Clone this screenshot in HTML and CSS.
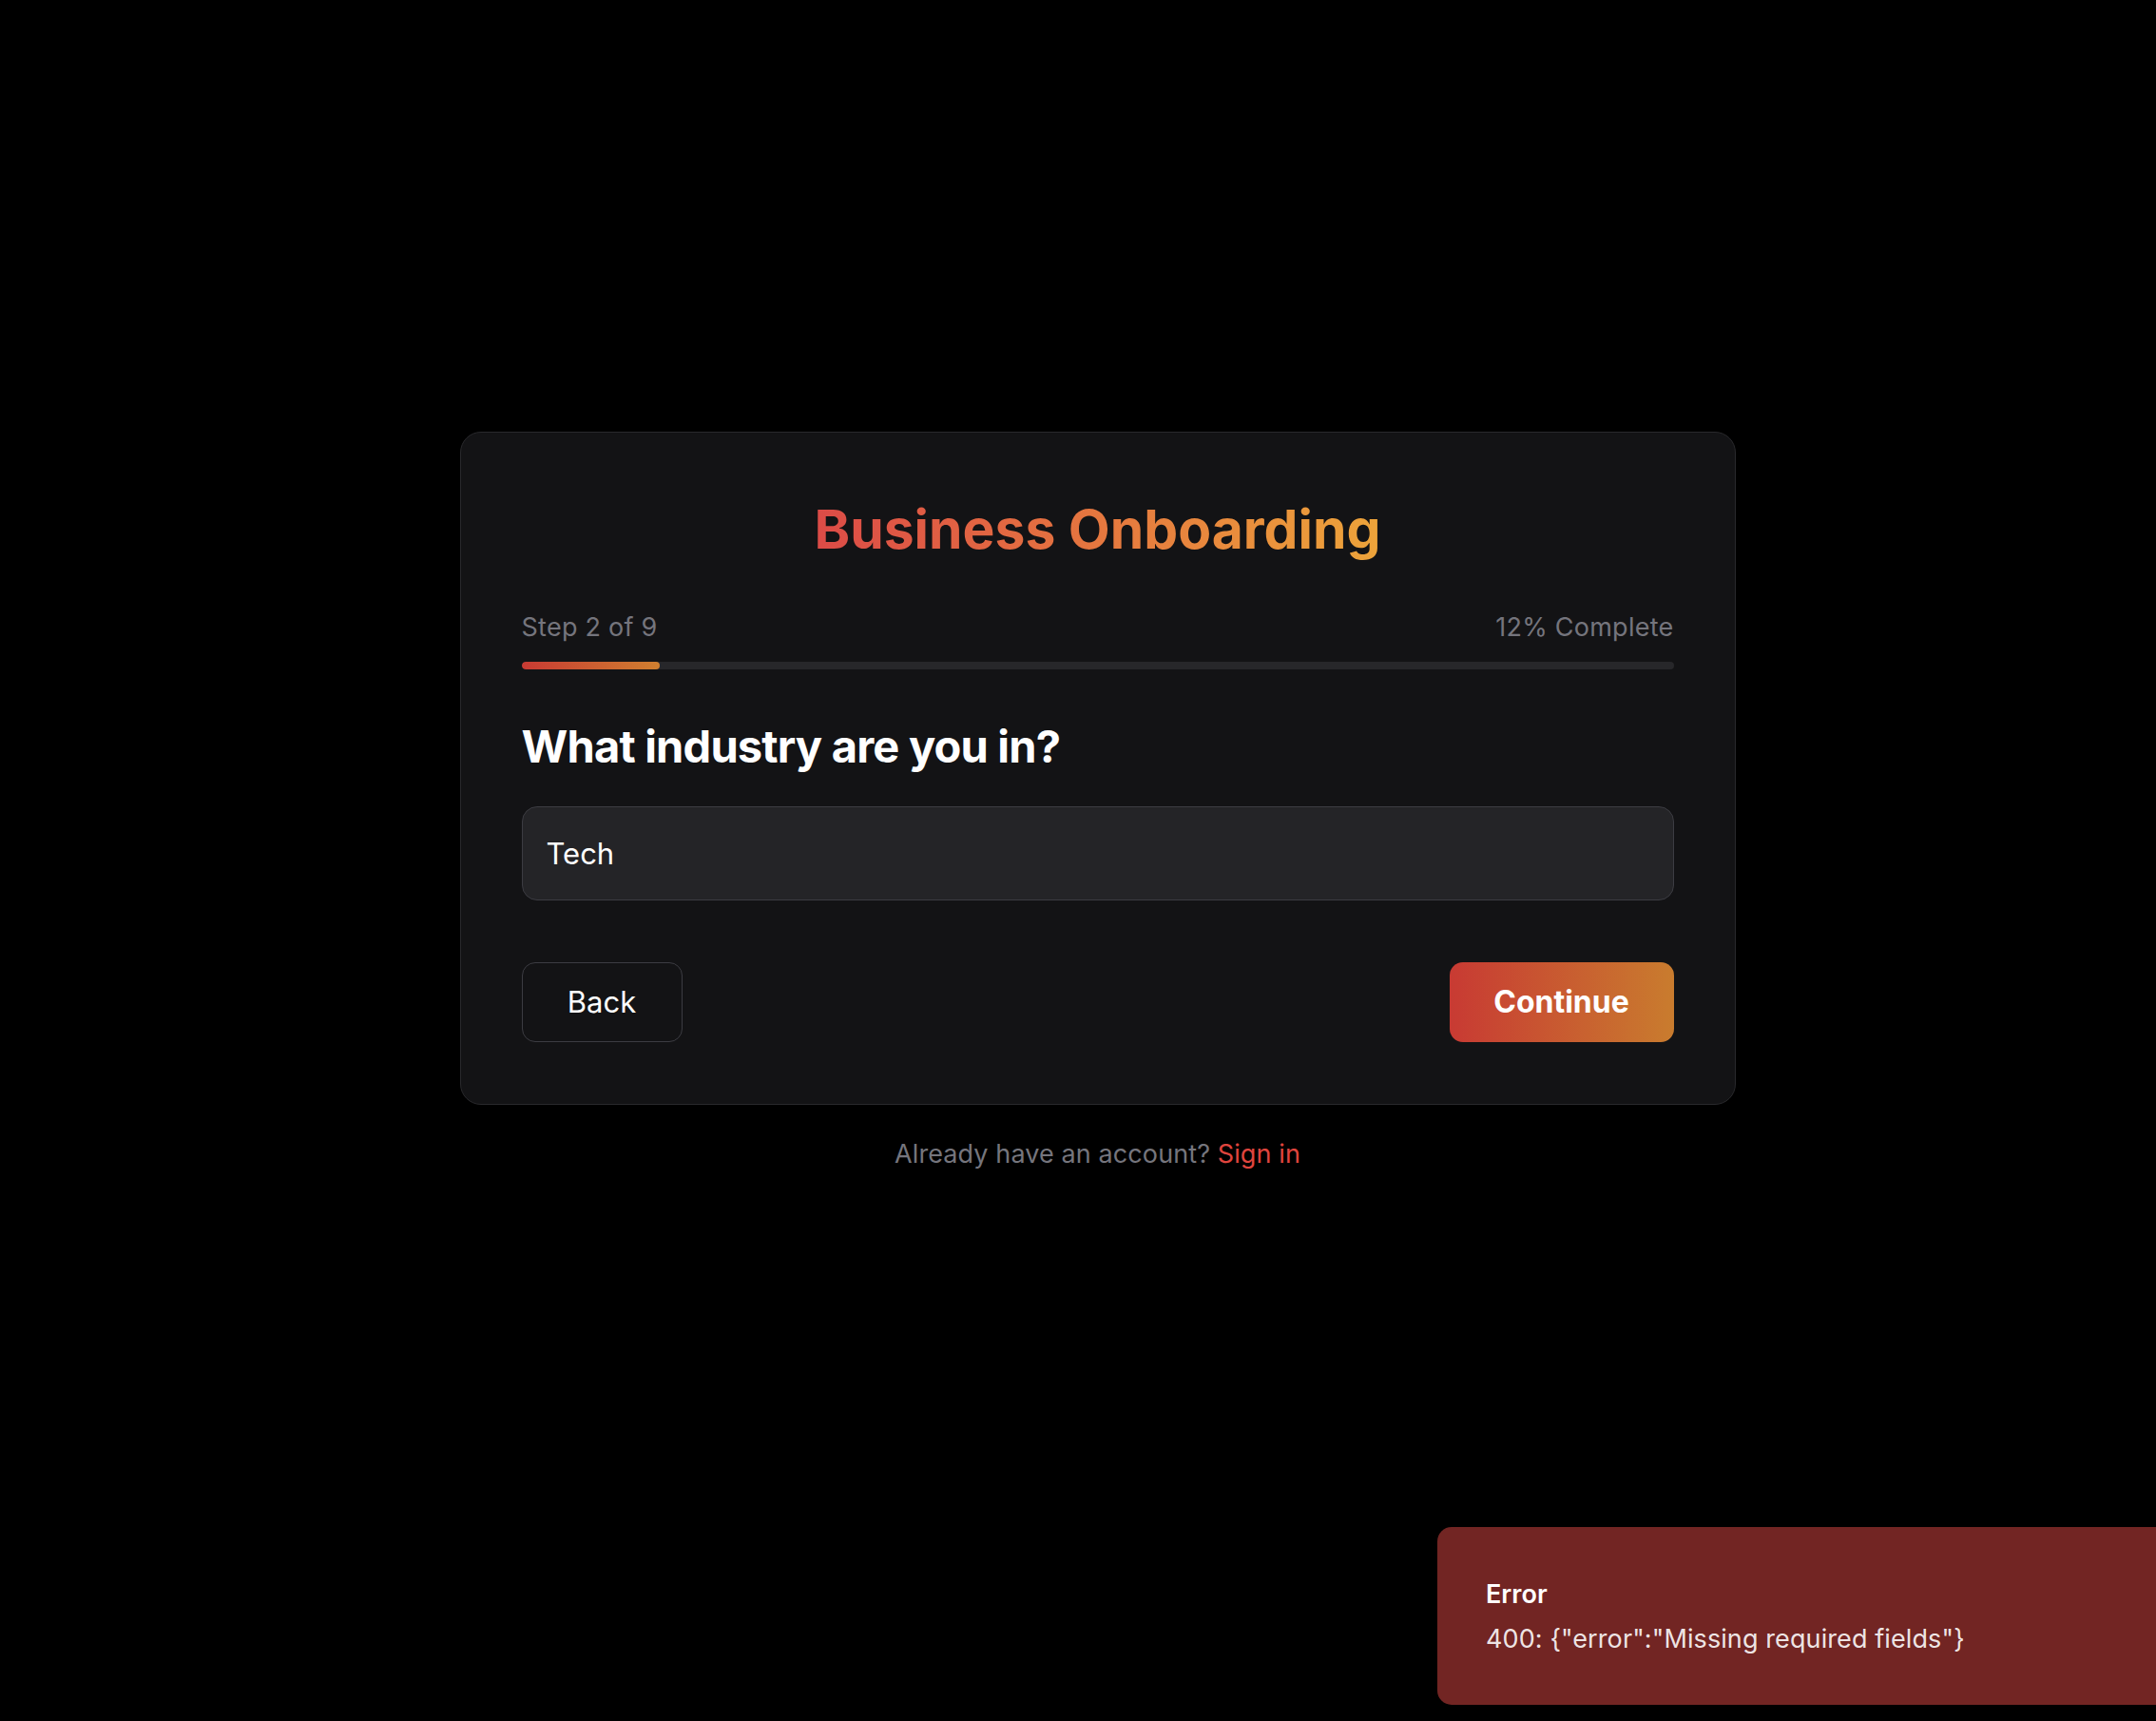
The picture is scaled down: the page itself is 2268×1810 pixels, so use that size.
FILE: index.html
```html
<!DOCTYPE html>
<html lang="en">
<head>
<meta charset="utf-8">
<title>Business Onboarding</title>
<link rel="stylesheet" href="styles.css">
</head>
<body>
<main class="page">
  <section class="card">
    <h1 class="title">Business Onboarding</h1>
    <div class="progress-meta">
      <span>Step 2 of 9</span>
      <span>12% Complete</span>
    </div>
    <div class="track"><div class="fill" style="width:12%"></div></div>
    <h2 class="question">What industry are you in?</h2>
    <input class="field" type="text" value="Tech">
    <div class="actions">
      <button class="btn-back" type="button">Back</button>
      <button class="btn-continue" type="button">Continue</button>
    </div>
  </section>
  <p class="footer">Already have an account? <a class="signin" href="#">Sign in</a></p>
</main>
<div class="toast">
  <div class="toast-title">Error</div>
  <div class="toast-msg">400: {"error":"Missing required fields"}</div>
</div>
</body>
</html>
```
FILE: styles.css
```css
* { box-sizing: border-box; }
html, body {
  margin: 0;
  background: #000;
  font-family: Inter, "Noto Sans", "Liberation Sans", sans-serif;
  color: #fff;
}
body { overflow: hidden; height: 1810px; }
.page {
  display: flex;
  flex-direction: column;
  align-items: center;
  padding-top: 454px;
  padding-left: 41px;
}
.card {
  width: 1342px;
  background: #131315;
  border: 1.5px solid #29292c;
  border-radius: 22px;
  padding: 68px 64px 65px;
  display: flex;
  flex-direction: column;
}
.title {
  margin: 0;
  font-size: 57px;
  line-height: 68px;
  font-weight: 700;
  text-align: center;
  letter-spacing: 0;
  background: linear-gradient(90deg, #dc4b47 0%, #e5773f 50%, #eda43a 100%);
  -webkit-background-clip: text;
  background-clip: text;
  color: transparent;
  align-self: center;
}
.progress-meta {
  margin-top: 51px;
  display: flex;
  justify-content: space-between;
  font-size: 27px;
  line-height: 36px;
  letter-spacing: 0.25px;
  color: #75757d;
}
.track {
  margin-top: 17.5px;
  height: 8px;
  border-radius: 4px;
  background: #27272a;
  overflow: hidden;
}
.fill {
  height: 100%;
  border-radius: 4px;
  background: linear-gradient(90deg, #c83a33, #d0802f);
}
.question {
  margin: 53px 0 0;
  font-size: 47px;
  line-height: 56px;
  font-weight: 700;
  letter-spacing: -0.8px;
}
.field {
  margin-top: 35px;
  height: 99px;
  width: 100%;
  background: #242427;
  border: 1.5px solid #3c3c42;
  border-radius: 16px;
  padding: 0 25px;
  font-family: inherit;
  font-size: 31px;
  color: #fff;
  outline: none;
}
.actions {
  margin-top: 65px;
  display: flex;
  justify-content: space-between;
}
.btn-back {
  width: 169px;
  height: 84px;
  background: transparent;
  border: 1.5px solid #3c3c42;
  border-radius: 14px;
  color: #fff;
  font-family: inherit;
  font-size: 31px;
}
.btn-continue {
  width: 236px;
  height: 84px;
  border: 0;
  border-radius: 14px;
  background: linear-gradient(90deg, #c83a33, #c97c2e);
  color: #fff;
  font-family: inherit;
  font-size: 32px;
  font-weight: 700;
}
.footer {
  margin: 34.5px 0 0;
  font-size: 27px;
  line-height: 36px;
  letter-spacing: 0.1px;
  color: #75757d;
}
.signin {
  color: #e0453e;
  text-decoration: none;
}
.toast {
  position: fixed;
  left: 1512px;
  top: 1606px;
  width: 820px;
  height: 187px;
  background: #722523;
  border-radius: 15px;
  padding: 54px 51px 0;
}
.toast-title {
  font-size: 27px;
  line-height: 33px;
  font-weight: 600;
  color: #fff;
}
.toast-msg {
  margin-top: 14px;
  font-size: 27px;
  line-height: 34px;
  letter-spacing: 0.1px;
  color: rgba(255, 255, 255, 0.9);
}
```
